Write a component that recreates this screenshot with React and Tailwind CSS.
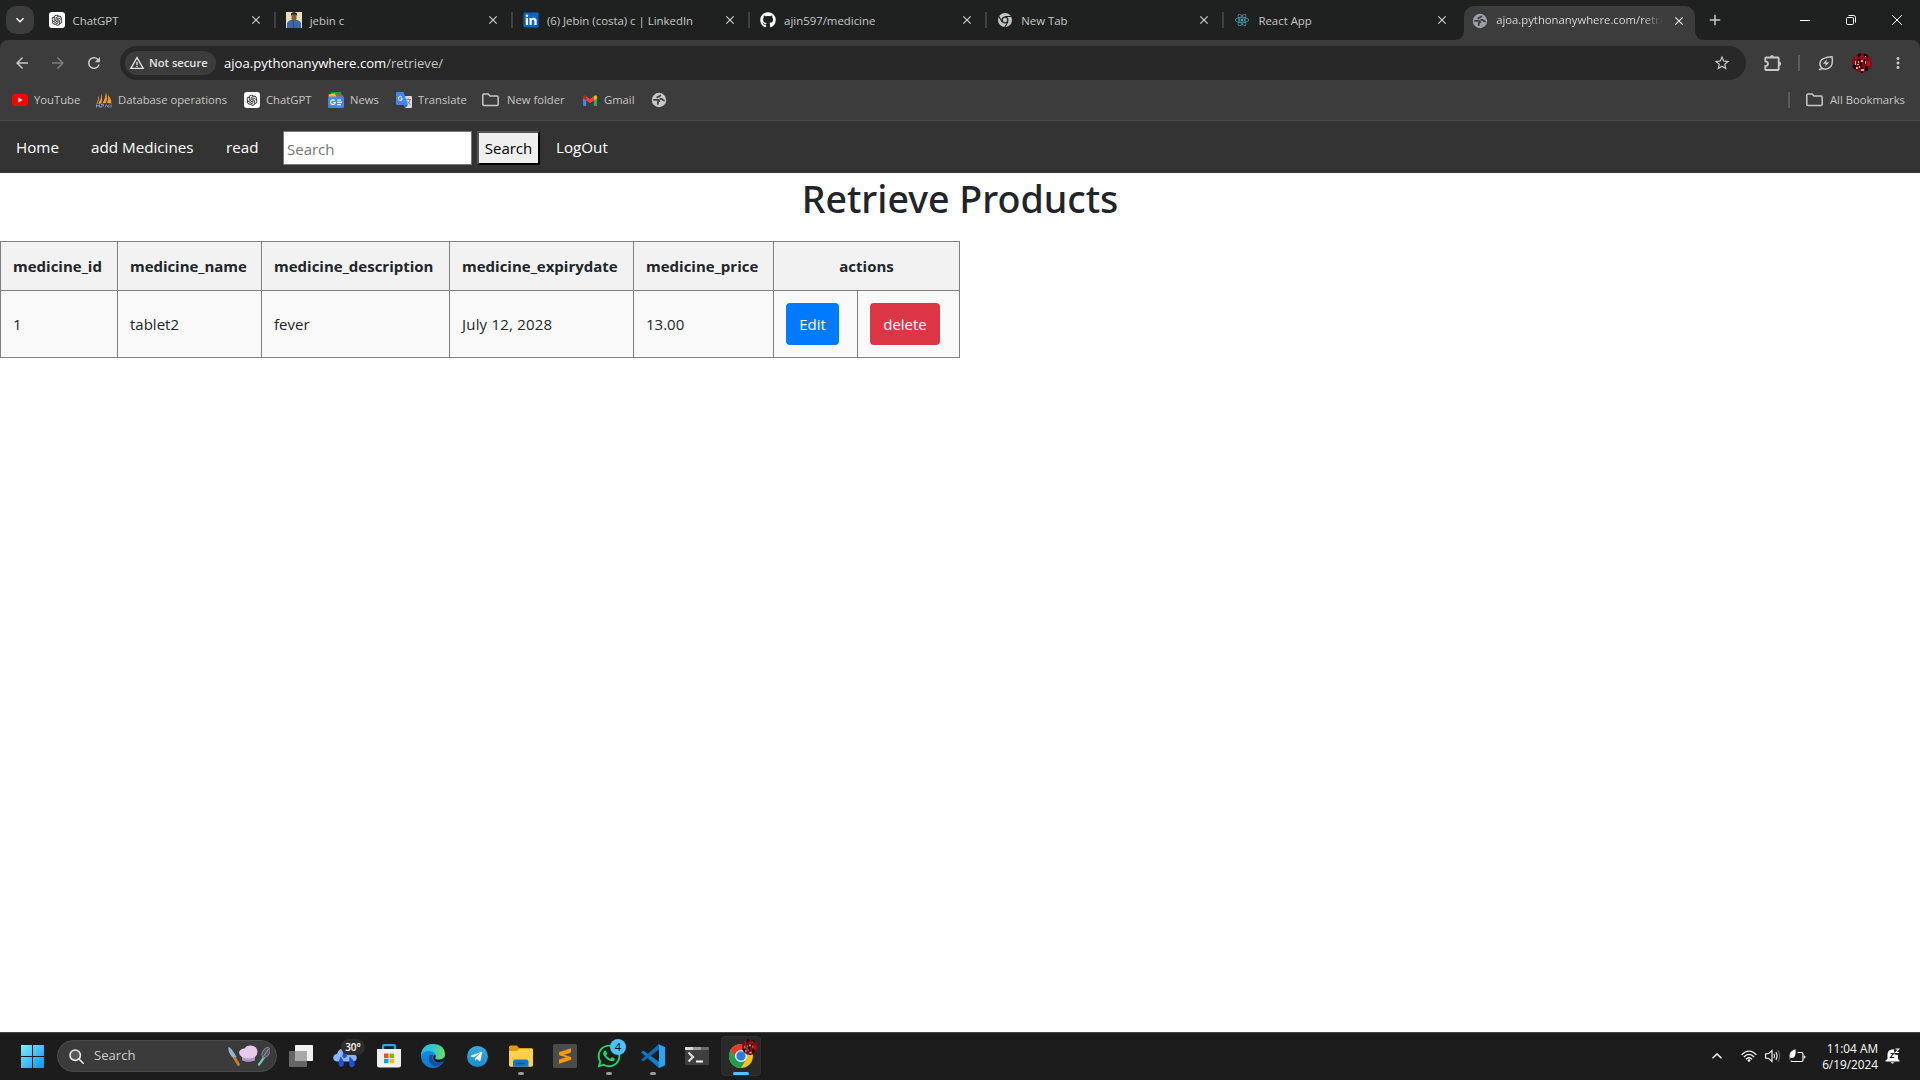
import React from "react";
import {
  MdArrowBack,
  MdArrowForward,
  MdRefresh,
  MdStarBorder,
  MdMoreVert,
  MdWarningAmber,
  MdClose,
  MdAdd,
  MdKeyboardArrowDown,
} from "react-icons/md";
import { AiOutlineOpenAI } from "react-icons/ai";
import { FaGithub, FaReact, FaTelegramPlane, FaWhatsapp } from "react-icons/fa";

const TABS = [
  { title: "ChatGPT", icon: <OpenAiIcon /> },
  { title: "jebin c", icon: <PersonPhoto /> },
  { title: "(6) Jebin (costa) c | LinkedIn", icon: <LinkedInIcon /> },
  { title: "ajin597/medicine", icon: <FaGithub className="size-4 text-white" /> },
  { title: "New Tab", icon: <GreyChrome /> },
  { title: "React App", icon: <FaReact className="size-3.5 text-[#4fb3cf]" />, last: true },
];

function OpenAiIcon() {
  return (
    <span className="flex size-4 items-center justify-center rounded-[3px] bg-white">
      <AiOutlineOpenAI className="size-[14px] text-[#222]" />
    </span>
  );
}

function PersonPhoto() {
  return (
    <svg viewBox="0 0 16 16" className="size-4">
      <rect width="16" height="16" fill="#e9dcbf" />
      <path d="M1 16V11Q2 8.500 5.500 7.800H10.500Q14 8.500 15 11V16Z" fill="#3f66a8" />
      <rect x="5.500" y="2" width="5" height="6.500" rx="2" fill="#8a5a3c" />
      <path d="M5 4V1.500Q8-1 11 1.500V4L10 2.500H6Z" fill="#1c1a20" />
      <path d="M7 8L8 16" stroke="#2b4a80" />
    </svg>
  );
}

function LinkedInIcon() {
  return (
    <svg viewBox="0 0 16 16" className="size-4">
      <rect x=".5" y="0.500" width="15" height="15" rx="1" fill="#0a66c2" />
      <path d="M2.800 6h2.200v7H2.800zM6.500 6h2.100v1c.9-1.700 5-1.800 5 1.700V13h-2.200V9.400c0-2.200-2.700-2-2.700 0V13H6.500z" fill="#fff" />
      <circle cx="3.900" cy="3.700" r="1.300" fill="#fff" />
    </svg>
  );
}

function GreyChrome() {
  return (
    <svg viewBox="0 0 16 16" className="size-4">
      <circle cx="8" cy="8" r="7" fill="#c3c6c9" />
      <circle cx="8" cy="8" r="3.500" fill="#1f2121" />
      <circle cx="8" cy="8" r="2.200" fill="#c3c6c9" />
      <path d="M8 4.500h6.500M5 9.800L1.800 4.300M11 9.800L7.800 15.200" stroke="#1f2121" strokeWidth="1.100" />
    </svg>
  );
}

function GlobeIcon({ className }) {
  return (
    <svg viewBox="0 0 16 16" className={className}>
      <circle cx="8" cy="8" r="7.200" fill="currentColor" />
      <path
        d="M9.500 2.800Q9.500 4.200 8 4.400 6.200 4.600 6 6.200M2.200 7.800H6.500Q8.500 8 8.300 10M8 10.200H6.800V12.800M8.500 6.800H10.500Q11.800 7 12 8.300L13.800 8.500"
        stroke="#3c3c3c"
        strokeWidth="1.700"
        fill="none"
      />
    </svg>
  );
}

function Puzzle() {
  return (
    <svg viewBox="0 0 18 18" className="size-[18px]">
      <path
        d="M2 3.500H14Q14.700 3.500 14.700 4.200V15.300Q14.700 16 14 16H2Q1.300 16 1.300 15.300V12.200Q4 12 4 9.800T1.300 7.300V4.200Q1.300 3.500 2 3.500Z"
        fill="none"
        stroke="currentColor"
        strokeWidth="1.800"
      />
      <path d="M6 3.500Q6 1 8 1T10 3.500ZM14.700 7.500Q17.200 7.500 17.200 9.700T14.700 11.900Z" fill="currentColor" />
    </svg>
  );
}

function Leaf() {
  return (
    <svg viewBox="0 0 16 16" className="size-4" fill="none" stroke="currentColor" strokeWidth="1.500">
      <path d="M14 1.800Q15.200 8 12.800 11.500 9.500 15.200 5 13.800 1 11.500 2.200 7 4 2.200 14 1.800ZM4.500 13.200L2.200 14.500H.8" />
      <path d="M8.800 4.300L4.800 8.800H7.800L7 11.800L11.300 7.200H8.300Z" fill="currentColor" stroke="none" />
    </svg>
  );
}

function Folder() {
  return (
    <svg viewBox="0 0 17 14" className="h-3.5 w-[17px]" fill="none" stroke="#c7c7c7" strokeWidth="1.500">
      <path d="M.8 2.200Q.8 1 2 1H6.200L8 3H15Q16.200 3 16.200 4.200V11.300Q16.200 12.500 15 12.500H2Q.8 12.500.8 11.300Z" />
    </svg>
  );
}

function YouTube() {
  return (
    <svg viewBox="0 0 16 12" className="h-3 w-4">
      <rect width="16" height="12" rx="3" fill="#f00" />
      <path d="M6.300 3.500v5L10.600 6z" fill="#fff" />
    </svg>
  );
}

function Sails() {
  return (
    <svg viewBox="0 0 16 16" className="size-4">
      <path d="M5.800 1.500Q6.500 7 5.500 11.500L2 12Q5 8 5.800 1.500M10 0.500Q12 6 10 11L6.500 11.500Q9.500 6 10 .5M12 3Q15.500 7 15.500 11.500L11 11Q12.800 7 12 3" fill="#f29a2e" />
      <path d="M2.500 4.500Q3 8 .8 12" stroke="#b98b55" fill="none" />
      <path d="M.5 15.500V12.500L2 14.500 3.500 12.500V15.500M5 12.500H7.500V14H5V16M9 15.500L10.500 12.500 12 15.500M13 12.500V15.500M15 12.500V15.500" stroke="#8d8fb8" fill="none" />
    </svg>
  );
}

function News() {
  return (
    <svg viewBox="0 0 16 16" className="size-4">
      <rect x="2.500" y="0" width="11" height="7" rx="1" fill="#0f9d58" />
      <path d="M.5 2.500L7 1.200 9 7H1Z" fill="#ffc107" />
      <path d="M9 2L15.500 3.500 14 7H8Z" fill="#ea4335" />
      <rect y="4.500" width="16" height="11.500" rx="1.200" fill="#4285f4" />
      <path d="M6.800 8.800A2.300 2.300 0 1 0 7.200 10.500H5M9.300 8.200H13M9.300 10.400H14M9.300 12.600H13" stroke="#fff" strokeWidth="1.200" fill="none" />
    </svg>
  );
}

function Translate() {
  return (
    <svg viewBox="0 0 16 16" className="size-4">
      <path d="M7 4H15Q16 4 16 5V15Q16 16 15 16H9Z" fill="#dadce0" />
      <path d="M1 0H7.500L12 13H1Q0 13 0 12V1Q0 0 1 0Z" fill="#4285f4" />
      <path d="M8.500 13H12L9.500 16Z" fill="#3367d6" />
      <path d="M6 5.200A2 2 0 1 0 6.400 6.800H4.600" stroke="#fff" strokeWidth="1" fill="none" />
      <path d="M10 7.500H15M12.500 6.500V7.500M14 7.500Q13.500 10.500 11.500 12M11.300 9Q12.500 11.500 14.500 12.500" stroke="#7a8087" strokeWidth=".9" fill="none" />
    </svg>
  );
}

function Gmail() {
  return (
    <svg viewBox="0 0 14 11" className="h-[11px] w-3.5">
      <path d="M0 2V10Q0 11 1 11H3.200V4.500Z" fill="#4285f4" />
      <path d="M14 2V10Q14 11 13 11H10.800V4.500Z" fill="#34a853" />
      <path d="M10.800 1.200Q14-.9 14 2V3.200L10.800 5.500Z" fill="#fbbc04" />
      <path d="M0 3.200V2Q0-.9 3.200 1.200V5.500Z" fill="#c5221f" />
      <path d="M3.200 1.200L7 4 10.800 1.200V5.500L7 8.300 3.200 5.500Z" fill="#ea4335" />
    </svg>
  );
}

function Avatar({ className }) {
  return (
    <svg viewBox="0 0 20 20" className={className}>
      <clipPath id="avatar-disc">
        <circle cx="10" cy="10" r="10" />
      </clipPath>
      <g clipPath="url(#avatar-disc)">
        <rect width="20" height="20" fill="#7d0d12" />
        <path d="M6 0h3v4H6zM12 1h4v3h-4zM0 12h4v4H0zM9 14h2v6H9zM5 6h3v2H5zM13 13h3v5h-3zM8 9h2v4H8zM12 6h1v5h-1z" fill="#150a0a" />
        <path d="M3 4h2v2H3zM8 3h3v1H8zM15 8h3v5h-3zM2 10h2v1H2zM11 4h2v2h-2z" fill="#b3141b" />
        <path d="M3 8h1v4H3zM5 11h2v1H5zM6 8h1v2H6zM9 7h2v2H9zM4 14h2v2H4zM9 16h3v2H9zM13 8h1v3h-1zM7 13h1v2H7zM13 3h1v1h-1z" fill="#cfa9a4" />
      </g>
    </svg>
  );
}

function Tab({ title, icon, last }) {
  return (
    <div className="flex h-full w-[237.2px] items-center pl-2.5">
      <span className="flex w-4 justify-center">{icon}</span>
      <span className="ml-2 flex-1 pt-px text-[11.4px] text-[#c7c8c8]">{title}</span>
      <MdClose className="mr-[11px] size-3.5 text-[#d0d0d0]" />
      <span className={last ? "h-4 w-0.5" : "h-4 w-0.5 bg-[#3f4040]"} />
    </div>
  );
}

function TabStrip() {
  return (
    <div className="flex h-10 items-center bg-[#1f2121]">
      <div className="ml-1.5 flex size-7 items-center justify-center rounded-[10px] bg-[#3c3c3c]">
        <MdKeyboardArrowDown className="size-4 text-white" />
      </div>
      <div className="ml-[4.500px] flex h-full items-center">
        {TABS.map((tab) => (
          <Tab key={tab.title} {...tab} />
        ))}
      </div>
      <div className="relative ml-[2.500px] flex h-[34px] w-[231px] items-center self-end rounded-t-[10px] bg-[#3c3c3c] pb-[5px] pl-2">
        <svg viewBox="0 0 10 10" className="absolute bottom-0 -left-2.5 size-2.5">
          <path d="M10 0V10H0Q10 10 10 0" fill="#3c3c3c" />
        </svg>
        <svg viewBox="0 0 10 10" className="absolute -right-2.5 bottom-0 size-2.5">
          <path d="M0 0V10H10Q0 10 0 0" fill="#3c3c3c" />
        </svg>
        <GlobeIcon className="size-4 text-[#9aa0a6]" />
        <span className="ml-2 w-[167px] overflow-hidden bg-linear-to-r from-[#e3e3e3] from-88% to-transparent bg-clip-text text-[11.3px] whitespace-nowrap text-transparent">
          ajoa.pythonanywhere.com/retri
        </span>
        <MdClose className="ml-[9px] size-3.5 shrink-0 text-[#e3e3e3]" />
      </div>
      <MdAdd className="ml-[11px] size-[18px] text-[#c7c7c7]" />
      <div className="flex flex-1 items-center justify-end gap-9 pr-[18px] text-white">
        <svg viewBox="0 0 10 10" className="size-2.5" stroke="currentColor">
          <path d="M0 5.500H10" />
        </svg>
        <svg viewBox="0 0 10 10" className="size-2.5" fill="none" stroke="currentColor">
          <rect x=".5" y="2.500" width="7" height="7" rx="1.200" />
          <path d="M2.500 .5H7.500Q9.500 .5 9.500 2.500V7.500" />
        </svg>
        <svg viewBox="0 0 10 10" className="size-2.5" stroke="currentColor">
          <path d="M0 0L10 10M10 0L0 10" />
        </svg>
      </div>
    </div>
  );
}

function Toolbar() {
  return (
    <div className="flex h-[46px] items-center rounded-t-[8px] bg-[#3c3c3c] text-[#c7c7c7]">
      <MdArrowBack className="ml-[13px] size-[18px]" />
      <MdArrowForward className="ml-[18px] size-[18px] text-[#7d7d7d]" />
      <MdRefresh className="ml-[18px] size-[18px]" />
      <div className="ml-[17px] flex h-[34px] w-[1626px] items-center rounded-full bg-[#282828] pl-[5px]">
        <div className="flex h-6 w-[91px] items-center rounded-full bg-[#3c3c3c] pl-1 text-[#e3e3e3]">
          <MdWarningAmber className="size-4" />
          <span className="ml-1 text-[11.2px] font-semibold whitespace-nowrap">Not secure</span>
        </div>
        <span className="ml-2 flex-1 pt-px text-[13.1px] text-[#c7c7c7]">
          <span className="text-white">ajoa.pythonanywhere.com</span>/retrieve/
        </span>
        <MdStarBorder className="mr-[15px] size-[18px]" />
      </div>
      <span className="ml-[18px]">
        <Puzzle />
      </span>
      <span className="ml-4 h-4 w-0.5 bg-[#5c5c5c]" />
      <span className="ml-[18px]">
        <Leaf />
      </span>
      <Avatar className="ml-[18px] size-5" />
      <MdMoreVert className="ml-[17px] size-[18px]" />
    </div>
  );
}

function Bookmark({ icon, label, className }) {
  return (
    <div className={className}>
      {icon}
      <span className="pt-px">{label}</span>
    </div>
  );
}

function BookmarksBar() {
  return (
    <div className="flex h-[35px] items-center border-b border-[#4a4a4a] bg-[#3c3c3c] pb-1.5 pl-3 text-[11.25px] whitespace-nowrap text-[#c7c7c7]">
      <Bookmark className="flex w-[84px] items-center gap-1.5" icon={<YouTube />} label="YouTube" />
      <Bookmark className="flex w-[148px] items-center gap-1.5" icon={<Sails />} label="Database operations" />
      <Bookmark className="flex w-[84px] items-center gap-1.5" icon={<OpenAiIcon />} label="ChatGPT" />
      <Bookmark className="flex w-[68px] items-center gap-1.5" icon={<News />} label="News" />
      <Bookmark className="flex w-[86px] items-center gap-1.5" icon={<Translate />} label="Translate" />
      <Bookmark className="flex w-[101px] items-center gap-2" icon={<Folder />} label="New folder" />
      <Bookmark className="flex w-[68px] items-center gap-[7px]" icon={<Gmail />} label="Gmail" />
      <GlobeIcon className="size-4 text-[#c7cacd]" />
      <span className="ml-auto h-4 w-0.5 bg-[#5c5c5c]" />
      <Bookmark className="ml-4 flex w-[114px] items-center gap-[7px]" icon={<Folder />} label="All Bookmarks" />
    </div>
  );
}

function SiteNav() {
  return (
    <nav className="flex h-[52px] items-center bg-[#333] text-[15.2px] text-white">
      <a className="w-[75px] pl-4">Home</a>
      <a className="w-[135px] pl-4">add Medicines</a>
      <a className="w-[73px] pl-4">read</a>
      <input
        placeholder="Search"
        className="mt-0.5 h-[34px] w-[189px] border border-[#767676] bg-white px-[3px] pt-0.5 text-[15px] text-black placeholder:text-[#757575]"
      />
      <button className="mt-0.5 ml-[5px] h-[34px] w-[63px] border-2 border-t-[#555] border-r-black border-b-black border-l-[#555] bg-[#efefef] text-[15px] text-black">
        Search
      </button>
      <a className="pl-4">LogOut</a>
    </nav>
  );
}

function Products() {
  const head = "border border-[#808080] px-3 text-left font-bold";
  const cell = "border border-[#808080] px-3";
  return (
    <main className="flex-1 bg-white text-[15px] text-[#212529]">
      <h1 className="mb-[18px] pt-0.5 text-center font-['Noto_Sans'] text-[37.600px] leading-[48px] font-medium">Retrieve Products</h1>
      <table className="w-[960px] table-fixed border-collapse">
        <colgroup>
          <col className="w-[117px]" />
          <col className="w-[144px]" />
          <col className="w-[188px]" />
          <col className="w-[184px]" />
          <col className="w-[140px]" />
          <col className="w-[84px]" />
          <col className="w-[102px]" />
        </colgroup>
        <thead>
          <tr className="h-[49px] bg-[#f2f2f2]">
            <th className={head}>medicine_id</th>
            <th className="border border-[#808080] px-3 text-left font-bold tracking-[-0.05px]">medicine_name</th>
            <th className={head}>medicine_description</th>
            <th className={head}>medicine_expirydate</th>
            <th className={head}>medicine_price</th>
            <th colSpan={2} className="border border-[#808080] text-center font-bold">
              actions
            </th>
          </tr>
        </thead>
        <tbody>
          <tr className="h-[67px] bg-[#f9f9f9]">
            <td className={cell}>1</td>
            <td className={cell}>tablet2</td>
            <td className={cell}>fever</td>
            <td className="border border-[#808080] px-3 tracking-[0.2px]">July 12, 2028</td>
            <td className={cell}>13.00</td>
            <td className={cell}>
              <button className="block h-[42px] w-[53px] rounded bg-[#007bff] text-white">Edit</button>
            </td>
            <td className={cell}>
              <button className="block h-[42px] w-[70px] rounded bg-[#dc3545] text-white">delete</button>
            </td>
          </tr>
        </tbody>
      </table>
    </main>
  );
}

function StartLogo() {
  return (
    <svg viewBox="0 0 23 23" className="size-[23px]">
      <linearGradient id="start" gradientUnits="userSpaceOnUse" x1="0" y1="0" x2="23" y2="23">
        <stop stopColor="#7deffc" />
        <stop offset="1" stopColor="#0a93f5" />
      </linearGradient>
      <path d="M0 0h11v11H0zM12 0h11v11H12zM0 12h11v11H0zM12 12h11v11H12z" fill="url(#start)" />
    </svg>
  );
}

function Cooking() {
  return (
    <svg viewBox="0 0 42 22" className="h-[22px] w-[42px]">
      <path d="M.5 2Q3 2 8.500 12L6 14Q-.5 8 .5 2" fill="#8fb9cf" />
      <path d="M6.800 13.300L10.500 19.500" stroke="#c47a35" strokeWidth="3" strokeLinecap="round" />
      <path d="M14 12Q10 9.500 11.500 6 13.500 3 16.500 3.500 19-.5 24 .8 28.500 1.500 29.300 5.500 30 9.500 27 12L26.500 15.500Q20 17.500 14.500 15.500Z" fill="#e6c9ec" />
      <path d="M14.200 12Q20 15 27 12L26.500 15.500Q20 17.500 14.500 15.500Z" fill="#b78fc6" />
      <path d="M36 12.500L31 19.500" stroke="#6cc4ac" strokeWidth="2.300" strokeLinecap="round" />
      <ellipse cx="38" cy="7.500" rx="3.300" ry="5.500" transform="rotate(33 38 7.500)" fill="#4f555a" stroke="#848c92" />
      <path d="M40.500 4L35.500 11.500" stroke="#9ba3a8" />
    </svg>
  );
}

function TaskView() {
  return (
    <svg viewBox="0 0 24 22" className="h-[22px] w-6">
      <rect x="6" width="18" height="16" rx=".8" fill="#f1f1f1" />
      <rect y="6" width="18" height="16" rx=".8" fill="#666" />
      <rect x="6" y="6" width="12" height="10" fill="#a8a8a8" />
    </svg>
  );
}

function Weather() {
  return (
    <div className="relative flex size-6 items-center">
      <svg viewBox="0 0 24 24" className="size-6">
        <path d="M4 17.500Q0 17 .2 13.500 .8 10 4 10 6 3.500 11.500 5 20 5 21 10.500 24 11 23.800 14.500 23 17.500 20 17.500Z" fill="#8cb6f7" />
        <path d="M11.500 6.500Q15 10.500 13.500 13 11.500 15 9.600 13 8.500 11 11.500 6.500M7.500 12.500Q12 17.500 10.500 21.500 8 24 6 21.500 5 19 7.500 12.500M16.500 12.500Q22.500 17.500 21.500 21.500 19.500 24.500 17 22.500 15.500 20 16.500 12.500" fill="#1f50e0" />
      </svg>
      <span className="absolute -top-[5px] left-2 flex h-4 w-6 items-center justify-center rounded-full bg-[#2d2d2d] text-[10px] font-semibold text-white">
        30°
      </span>
    </div>
  );
}

function Store() {
  return (
    <svg viewBox="0 0 24 24" className="size-6">
      <path d="M6 7V2.200Q6 1.200 7 1.200H17Q18 1.200 18 2.200V7" fill="none" stroke="#25a6e8" strokeWidth="2.200" />
      <path d="M0 5H24V21Q24 23.500 21.500 23.500H2.500Q0 23.500 0 21Z" fill="#efefef" />
      <path d="M7 9.500h4.500V14H7z" fill="#f25022" />
      <path d="M12.500 9.500H17V14h-4.500z" fill="#7fba00" />
      <path d="M7 14.800h4.500v4.400H7z" fill="#00a4ef" />
      <path d="M12.500 14.800H17v4.400h-4.500z" fill="#ffb900" />
    </svg>
  );
}

function Edge() {
  return (
    <svg viewBox="0 0 24 24" className="size-6">
      <defs>
        <linearGradient id="edge-top" x1="0" y1=".4" x2="1" y2=".5">
          <stop stopColor="#2fb5f0" />
          <stop offset=".5" stopColor="#30c8c8" />
          <stop offset="1" stopColor="#6ee05a" />
        </linearGradient>
        <linearGradient id="edge-left" x1="0" y1="0" x2="0" y2="1">
          <stop stopColor="#1793e0" />
          <stop offset="1" stopColor="#1078d6" />
        </linearGradient>
      </defs>
      <circle cx="12" cy="12" r="12" fill="url(#edge-left)" />
      <path d="M8.500 11Q6 20 14 22.500 19 22.500 22.500 17.500 16 20.500 12.500 17 10 14 12 11Z" fill="#124f9e" />
      <path d="M0 11.500Q1 0 12 0 23.500.5 24 10 23.500 15.500 18 15.700 13.500 15.500 14.200 13.800 15.500 12.500 14.500 10.500 12.500 7 8 7 2.500 7 0 11.500" fill="url(#edge-top)" />
      <path d="M14.200 13.800Q13.500 15.500 18 15.700 21.500 15.500 23.300 13.200L24.500 15 22.500 17.500Q16 20 13 16.500 11.500 14 12.800 11.800 14 9.800 14.700 11.500 15 12.800 14.200 13.800" fill="#1c1c1c" />
    </svg>
  );
}

function Explorer() {
  return (
    <svg viewBox="0 0 24 24" className="size-6">
      <path d="M0 3Q0 1.500 1.500 1.500H8L10 4H22.500Q24 4 24 5.500V10H0Z" fill="#e19a0c" />
      <path d="M0 7H8L10 5H24V21Q24 22.800 22.500 22.800H1.500Q0 22.800 0 21Z" fill="#ffd04d" />
      <path d="M4 22.800V18Q4 15.500 6.500 15.500H17Q19.500 15.500 19.500 18V22.800Z" fill="#1277c8" />
      <path d="M7.500 19.500H16" stroke="#0b5089" strokeWidth="1.300" />
    </svg>
  );
}

function Sublime() {
  return (
    <svg viewBox="0 0 24 24" className="size-6">
      <rect width="24" height="24" rx="1.500" fill="#4b4b4b" />
      <path d="M6 8.300L18 4.200V8.500L11 10.800 18 13V15.800L6 19.800V15.500L13 13.200 6 11.200Z" fill="#ff9800" />
    </svg>
  );
}

function WhatsApp() {
  return (
    <div className="relative size-6">
      <FaWhatsapp className="-mt-px -ml-px size-[26px] text-[#25d366]" />
      <span className="absolute -top-[5px] left-[13px] flex size-4 items-center justify-center rounded-full bg-[#4cc2ff] text-[11px] text-black">4</span>
    </div>
  );
}

function VsCode() {
  return (
    <svg viewBox="0 0 24 24" className="size-6">
      <path d="M0 8.300L1.600 7Q2.200 6.600 2.800 7L24 22 18 24Z" fill="#0f7fcf" />
      <path d="M0 15.700L1.600 17Q2.200 17.400 2.800 17L18 5.500V0Z" fill="#0a6ab4" />
      <path d="M17 0L24 3V21L17 24Q18 23.500 18 22V2Q18 .5 17 0" fill="#29a5f2" />
      <path d="M11.500 12L18 7V17Z" fill="#1c1c1c" />
    </svg>
  );
}

function Terminal() {
  return (
    <svg viewBox="0 0 24 18" className="h-[18px] w-6">
      <rect width="24" height="18" rx="1" fill="#3f3f3f" />
      <path d="M0 1Q0 0 1 0H8V3H0Z" fill="#d9d9d9" />
      <path d="M8 0H16V3H8Z" fill="#9f9f9f" />
      <path d="M16 0H23Q24 0 24 1V3H16Z" fill="#6b6b6b" />
      <path d="M3.500 5.500L8 10 3.500 14.500" stroke="#d8d8d8" strokeWidth="2.300" fill="none" />
      <path d="M11 14.500H18" stroke="#fff" strokeWidth="2" />
    </svg>
  );
}

function Chrome() {
  return (
    <div className="relative size-6">
      <svg viewBox="0 0 24 24" className="size-6">
        <circle cx="12" cy="12" r="12" fill="#fbc116" />
        <path d="M12 6H22.400A12 12 0 0 0 1.600 6L6.800 15Z" fill="#e33b2e" />
        <path d="M1.600 6A12 12 0 0 0 12 24L17.200 15 12 17 6.800 15Z" fill="#1fa051" />
        <circle cx="12" cy="12" r="6" fill="#fff" />
        <circle cx="12" cy="12" r="4.700" fill="#2a7de9" />
      </svg>
      <Avatar className="absolute -top-[5px] left-[13px] size-4" />
    </div>
  );
}

const APPS = [
  { name: "taskview", icon: <TaskView /> },
  { name: "weather", icon: <Weather /> },
  { name: "store", icon: <Store /> },
  { name: "edge", icon: <Edge /> },
  {
    name: "telegram",
    icon: (
      <span className="flex size-[21px] items-center justify-center rounded-full bg-linear-to-b from-[#35ade1] to-[#1b8cc9]">
        <FaTelegramPlane className="mr-0.5 size-[13px] text-white" />
      </span>
    ),
  },
  { name: "explorer", icon: <Explorer />, open: true },
  { name: "sublime", icon: <Sublime /> },
  { name: "whatsapp", icon: <WhatsApp />, open: true },
  { name: "vscode", icon: <VsCode />, open: true },
  { name: "terminal", icon: <Terminal /> },
  { name: "chrome", icon: <Chrome />, active: true },
];

function AppButton({ icon, open, active }) {
  return (
    <div className="flex w-11 justify-center">
      <div
        className={
          active
            ? "relative flex size-10 items-center justify-center rounded border border-[#303030] bg-[#292929]"
            : "relative flex size-10 items-center justify-center"
        }
      >
        {icon}
        {open && <span className="absolute bottom-[1px] h-[3px] w-1.5 rounded-full bg-[#9a9a9a]" />}
        {active && <span className="absolute bottom-0 h-[3px] w-4 rounded-full bg-[#4cc2ff]" />}
      </div>
    </div>
  );
}

function Tray() {
  return (
    <div className="ml-auto flex items-center text-white">
      <svg viewBox="0 0 10 6" className="h-1.5 w-2.5" fill="none" stroke="currentColor" strokeWidth="1.500">
        <path d="M.5 5.200L5 .9 9.500 5.200" />
      </svg>
      <svg viewBox="0 0 16 12" className="ml-[19px] h-3 w-4" fill="none" stroke="currentColor" strokeWidth="1.200">
        <path d="M.6 4.800Q8-2.800 15.400 4.800M2.900 7Q8 1.800 13.100 7M5 9.200Q8 6.300 11 9.200" />
        <circle cx="8" cy="10.500" r="1.300" fill="currentColor" stroke="none" />
      </svg>
      <svg viewBox="0 0 16 14" className="ml-2 h-3.5 w-4" fill="none" stroke="currentColor" strokeWidth="1.100">
        <path d="M.6 4.800H3.300L7 1.500V12.500L3.300 9.200H.6Z" />
        <path d="M8.900 4.800Q10.300 7 8.900 9.200M10.800 3Q13.300 7 10.800 11" />
        <path d="M12.800 1.200Q16.500 7 12.800 12.800" stroke="#666" />
      </svg>
      <svg viewBox="0 0 17 14" className="ml-2 h-3.5 w-[17px]">
        <path d="M.5 6Q1 2 6.500.3 7.500 7 4 9 2.500 9.300 1.500 8.500L.8 11Z" fill="#fff" />
        <path d="M8.500 3.500H12.500Q14 3.500 14 5V11Q14 12.500 12.500 12.500H3.500Q2 12.500 2 11.500" fill="none" stroke="#fff" strokeWidth="1.200" />
        <path d="M15 6.500Q16.500 6.500 16.500 8T15 9.500Z" fill="#fff" />
      </svg>
      <div className="ml-[15px] flex w-[57px] flex-col items-end pb-px text-[11.8px] leading-4 whitespace-nowrap">
        <span>11:04 AM</span>
        <span>6/19/2024</span>
      </div>
      <svg viewBox="0 0 16 16" className="mr-[19px] ml-[7px] size-4">
        <path d="M2.500 6Q3 1.500 8 1.200L9 1.500 9.500 6.500 13 7V11L14.500 12.500V13.500H.5V12.500L2.500 11Z" fill="#fff" />
        <path d="M5.500 14.300H9.500Q7.500 16.800 5.500 14.300" fill="#fff" />
        <path d="M5.500 5.500H8.500L5.500 9.500H9" stroke="#1c1c1c" fill="none" strokeWidth="1.100" />
        <path d="M10.500 1H13.800L10.700 4.500H14" stroke="#fff" fill="none" strokeWidth="1.100" />
      </svg>
    </div>
  );
}

function Taskbar() {
  return (
    <div className="flex h-12 items-center border-t border-[#444] bg-[#1c1c1c] pb-px pl-[21px]">
      <StartLogo />
      <div className="ml-[13px] mr-0.5 flex h-8 w-[220px] items-center rounded-full border border-[#4a4a4a] bg-[#3b3b3b] pl-[11px] text-[13.1px] text-[#cdcdcd]">
        <svg viewBox="0 0 15 15" className="size-[15px]" fill="none" stroke="#e8e8e8" strokeWidth="1.600">
          <circle cx="6.200" cy="6.200" r="5.200" fill="#5a5a5a" />
          <path d="M10 10L14.200 14.200" strokeLinecap="round" />
        </svg>
        <span className="ml-2.5 flex-1">Search</span>
        <span className="mr-[6px]">
          <Cooking />
        </span>
      </div>
      {APPS.map((app) => (
        <AppButton key={app.name} {...app} />
      ))}
      <Tray />
    </div>
  );
}

export default function App() {
  return (
    <div className="flex h-[1080px] w-[1920px] flex-col overflow-hidden bg-[#1f2121] font-['Open_Sans','Noto_Sans',sans-serif]">
      <TabStrip />
      <Toolbar />
      <BookmarksBar />
      <SiteNav />
      <Products />
      <Taskbar />
    </div>
  );
}
